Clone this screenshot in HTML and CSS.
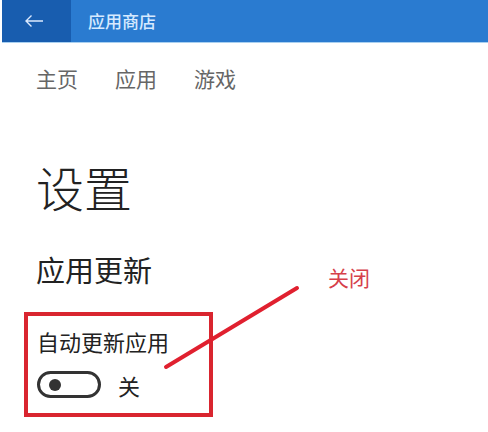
FILE: index.html
```html
<!DOCTYPE html>
<html lang="zh-CN">
<head>
  <meta charset="UTF-8">
  <title>应用商店 - 设置</title>
  <link rel="stylesheet" href="styles.css">
</head>
<body>

<header class="titlebar">
  <div class="back">
    <svg width="20" height="14" viewBox="0 0 20 14">
      <path d="M19 7H2M7.5 1.5L2 7l5.5 5.5" fill="none" stroke="#dbeaff" stroke-width="1.4"/>
    </svg>
  </div>
  <div class="title">应用商店</div>
</header>

<nav class="tabs">
  <span>主页</span>
  <span>应用</span>
  <span>游戏</span>
</nav>

<main class="content">
  <h1>设置</h1>
  <h2>应用更新</h2>

  <section class="setting">
    <div class="label">自动更新应用</div>
    <div class="switch-row">
      <div class="switch"><div class="knob"></div></div>
      <span class="state">关</span>
    </div>
  </section>
</main>

<svg class="pointer" width="488" height="432" viewBox="0 0 488 432">
  <line x1="166" y1="367" x2="297" y2="288" stroke="#e0202f" stroke-width="4" stroke-linecap="round"/>
</svg>
<div class="note">关闭</div>

</body>
</html>
```

FILE: styles.css
```css
body {
  margin: 0;
  background: #ffffff;
  font-family: "Noto Sans CJK SC", "Noto Sans", sans-serif;
  color: #222;
  width: 488px;
  height: 432px;
  overflow: hidden;
  position: relative;
}

.titlebar {
  display: flex;
  height: 42px;
  margin-left: 2px;
  background: #2a7bd0;
  border-bottom: 1px solid #a9d0f0;
}

.back {
  width: 69px;
  background: #185daf;
  display: flex;
  align-items: center;
  justify-content: center;
}

.back svg {
  margin-right: 6px;
}

.title {
  padding-left: 17px;
  font-size: 17px;
  line-height: 42px;
  color: #d6eaff;
  font-weight: 500;
}

.tabs {
  display: flex;
  gap: 37px;
  padding: 24px 0 0 36px;
  font-size: 21px;
  line-height: 22px;
  color: #666;
}

.content {
  padding-left: 36px;
}

h1 {
  margin: 73px 0 0;
  font-size: 48px;
  line-height: 48px;
  font-weight: 300;
  color: #222;
}

h2 {
  margin: 45px 0 0;
  font-size: 29px;
  line-height: 29px;
  font-weight: 400;
  color: #222;
}

.setting {
  box-sizing: border-box;
  width: 189px;
  margin: 28px 0 0 -12px;
  padding: 14px 0 15px 9px;
  border: 4px solid #d9252f;
}

.label {
  font-size: 22px;
  line-height: 22px;
}

.switch-row {
  display: flex;
  align-items: center;
  gap: 17px;
  margin-top: 19px;
}

.switch {
  box-sizing: border-box;
  width: 64px;
  height: 27px;
  border: 3px solid #333;
  border-radius: 14px;
  display: flex;
  align-items: center;
  padding-left: 9px;
}

.knob {
  width: 12px;
  height: 12px;
  border-radius: 50%;
  background: #333;
}

.state {
  font-size: 22px;
  line-height: 22px;
}

.pointer {
  position: absolute;
  left: 0;
  top: 0;
  pointer-events: none;
}

.note {
  position: absolute;
  left: 328px;
  top: 267px;
  font-size: 21px;
  line-height: 21px;
  color: #d6404a;
}
```
